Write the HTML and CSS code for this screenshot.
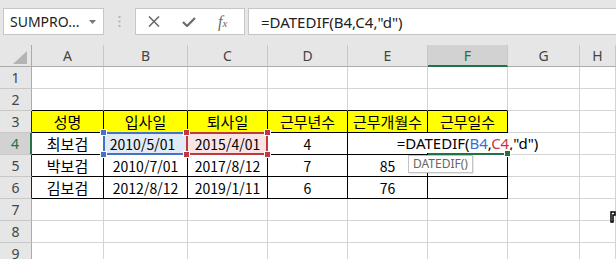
FILE: index.html
```html
<!DOCTYPE html>
<html lang="ko">
  <head>
    <meta charset="UTF-8" />
    <title>DATEDIF</title>
    <link rel="stylesheet" href="styles.css">
  </head>
  <body>
    <div class="toolbar">
      <div class="namebox">
        <span>SUMPRO...</span>
        <svg width="7" height="4" viewBox="0 0 7 4"><path d="M0 0h7L3.5 4z" fill="#777"/></svg>
      </div>
      <div class="grip">
        <svg width="3" height="11" viewBox="0 0 3 11"><rect x="0.5" y="0" width="2" height="2" fill="#b5b5b5"/><rect x="0.5" y="4.5" width="2" height="2" fill="#b5b5b5"/><rect x="0.5" y="9" width="2" height="2" fill="#b5b5b5"/></svg>
      </div>
      <div class="fxbox">
        <svg width="12" height="11" viewBox="0 0 12 11"><path d="M1 0.5l10 10M11 0.5l-10 10" stroke="#6b6b6b" stroke-width="1.6" fill="none"/></svg>
        <svg width="14" height="10" viewBox="0 0 14 10"><path d="M1 5l4 4l8 -8" stroke="#6b6b6b" stroke-width="2.2" fill="none"/></svg>
        <span class="fx">f<sub>x</sub></span>
      </div>
      <div class="formula">=DATEDIF(B4,C4,"d")</div>
    </div>

    <div class="sheet">
      <!-- column headers -->
      <div class="ch corner"><svg width="14" height="13" viewBox="0 0 14 13"><path d="M14 0v13H0z" fill="#b4b4b4"/></svg></div>
      <div class="ch">A</div>
      <div class="ch">B</div>
      <div class="ch">C</div>
      <div class="ch">D</div>
      <div class="ch">E</div>
      <div class="ch on">F</div>
      <div class="ch">G</div>
      <div class="ch">H</div>

      <!-- row 1 -->
      <div class="rh">1</div>
      <div class="c"></div><div class="c"></div><div class="c"></div><div class="c"></div>
      <div class="c"></div><div class="c"></div><div class="c"></div><div class="c"></div>

      <!-- row 2 -->
      <div class="rh">2</div>
      <div class="c top"></div><div class="c top"></div><div class="c top"></div><div class="c top"></div>
      <div class="c top"></div><div class="c top"></div><div class="c"></div><div class="c"></div>

      <!-- row 3 -->
      <div class="rh edge">3</div>
      <div class="c t hd">성명</div>
      <div class="c t hd">입사일</div>
      <div class="c t hd">퇴사일</div>
      <div class="c t hd">근무년수</div>
      <div class="c t hd">근무개월수</div>
      <div class="c t hd">근무일수</div>
      <div class="c"></div><div class="c"></div>

      <!-- row 4 -->
      <div class="rh on">4</div>
      <div class="c t">최보검</div>
      <div class="c t n ref-b">
        2010/5/01
        <span class="box"></span>
        <span class="sq tl"></span><span class="sq bl"></span>
      </div>
      <div class="c t n ref-c">
        2015/4/01
        <span class="box"></span>
        <span class="sq tl"></span><span class="sq bl"></span>
        <span class="sq tr"></span><span class="sq br"></span>
      </div>
      <div class="c t n">4</div>
      <div class="c t"></div>
      <div class="c t active">
        <span class="edit">=DATEDIF(<b class="blue">B4</b>,<b class="red">C4</b>,"d")</span>
        <span class="handle"></span>
        <span class="tip">DATEDIF()</span>
      </div>
      <div class="c"></div><div class="c"></div>

      <!-- row 5 -->
      <div class="rh edge">5</div>
      <div class="c t">박보검</div>
      <div class="c t n">2010/7/01</div>
      <div class="c t n">2017/8/12</div>
      <div class="c t n">7</div>
      <div class="c t n">85</div>
      <div class="c t"></div>
      <div class="c"></div><div class="c"></div>

      <!-- row 6 -->
      <div class="rh edge">6</div>
      <div class="c t">김보검</div>
      <div class="c t n">2012/8/12</div>
      <div class="c t n">2019/1/11</div>
      <div class="c t n">6</div>
      <div class="c t n">76</div>
      <div class="c t"></div>
      <div class="c"></div><div class="c"></div>

      <!-- rows 7-9 -->
      <div class="rh">7</div>
      <div class="c"></div><div class="c"></div><div class="c"></div><div class="c"></div>
      <div class="c"></div><div class="c"></div><div class="c"></div><div class="c"></div>
      <div class="rh">8</div>
      <div class="c"></div><div class="c"></div><div class="c"></div><div class="c"></div>
      <div class="c"></div><div class="c"></div><div class="c"></div><div class="c"></div>
      <div class="rh">9</div>
      <div class="c"></div><div class="c"></div><div class="c"></div><div class="c"></div>
      <div class="c"></div><div class="c"></div><div class="c"></div><div class="c"></div>

      <svg class="cursor" width="6" height="12" viewBox="0 0 6 12"><path d="M1 1h4v3h-2v7h-2z" fill="#fff" stroke="#000" stroke-width="1.5"/></svg>
    </div>
  </body>
</html>
```

FILE: styles.css
```css
body {
  margin: 0;
  background: #e6e6e6;
  font-family: "Noto Sans", sans-serif;
  overflow: hidden;
}

/* formula bar */
.toolbar {
  display: flex;
  align-items: center;
  height: 45px;
  padding: 8px 0 10px 3px;
  box-sizing: border-box;
}

.namebox {
  width: 101px;
  height: 27px;
  box-sizing: border-box;
  border: 1px solid #c6c6c6;
  background: #fff;
  display: flex;
  align-items: center;
  justify-content: space-between;
  padding: 0 7px 0 6px;
  font-size: 14px;
  color: #222;
}

.grip {
  width: 31px;
  display: flex;
  justify-content: center;
}

.fxbox {
  width: 110px;
  height: 27px;
  box-sizing: border-box;
  border: 1px solid #c6c6c6;
  background: #fff;
  display: flex;
  align-items: center;
  gap: 22px;
  padding-left: 12px;
}

.fx {
  font-family: "Liberation Serif", serif;
  font-style: italic;
  font-size: 16px;
  color: #6b6b6b;
}

.fx sub {
  font-size: 11px;
  vertical-align: 0;
}

.formula {
  flex: 1;
  margin-left: 3px;
  height: 27px;
  box-sizing: border-box;
  border: 1px solid #c6c6c6;
  border-right: none;
  background: #fff;
  display: flex;
  align-items: center;
  padding-left: 12px;
  font-size: 15px;
  color: #222;
  white-space: nowrap;
}

/* sheet grid */
.sheet {
  position: relative;
  display: grid;
  grid-template-columns: 32px 72px 84px 80px 80px 80px 80px 72px 1fr;
  grid-auto-rows: 22px;
  background: #fff;
}

.ch,
.rh,
.c {
  box-sizing: border-box;
  display: flex;
  align-items: center;
  justify-content: center;
}

.ch {
  background: #e6e6e6;
  border-right: 1px solid #c8c8c8;
  border-bottom: 1px solid #ababab;
  font-size: 14px;
  color: #444;
}

.ch.corner {
  border-right-color: #ababab;
  justify-content: flex-end;
  align-items: flex-end;
  padding: 0 4px 2px 0;
}

.ch.on {
  background: #d2d2d2;
  border-bottom: 2px solid #217346;
  color: #217346;
}

.rh {
  background: #e6e6e6;
  border-right: 1px solid #ababab;
  border-bottom: 1px solid #c8c8c8;
  font-size: 14px;
  color: #444;
}

.rh.edge {
  border-right-color: #222;
}

.rh.on {
  background: #d2d2d2;
  border-right: 2px solid #217346;
  color: #217346;
}

.c {
  border-right: 1px solid #d4d4d4;
  border-bottom: 1px solid #d4d4d4;
  font-family: "Noto Sans CJK KR", sans-serif;
  font-size: 15px;
  color: #000;
  white-space: nowrap;
}

.c.n {
  font-size: 14px;
}

.c.top {
  border-bottom-color: #000;
}

.c.t {
  border-right-color: #000;
  border-bottom-color: #000;
}

.c.hd {
  background: #ffff00;
}

/* referenced ranges */
.ref-b,
.ref-c {
  position: relative;
}

.ref-b {
  background: #e1eaf7;
  padding-right: 6px;
}

.ref-c {
  background: #f9e3e3;
}

.box {
  position: absolute;
  top: -1px;
  bottom: -1px;
  left: -1px;
  right: -1px;
  border: 2px solid #4472c4;
}

.ref-c .box {
  left: -2px;
  border-color: #c0393f;
}

.sq {
  position: absolute;
  width: 5px;
  height: 5px;
  background: #4472c4;
  border: 1px solid #fff;
}

.ref-c .sq {
  background: #c0393f;
}

.sq.tl { top: -4px; left: -4px; }
.sq.bl { bottom: -4px; left: -4px; }
.ref-c .sq.tl { left: -5px; }
.ref-c .sq.bl { left: -5px; }
.sq.tr { top: -4px; right: -4px; }
.sq.br { bottom: -4px; right: -4px; }

/* cell in edit mode */
.c.active {
  position: relative;
  z-index: 2;
  border-bottom: 2px solid #217346;
}

.edit {
  background: #fff;
  font-family: "Noto Sans", sans-serif;
  font-size: 15px;
  padding: 0 2px;
}

.edit b {
  font-weight: normal;
}

.blue {
  color: #3a6fd0;
}

.red {
  color: #c8343c;
}

.handle {
  position: absolute;
  right: -4px;
  bottom: -4px;
  width: 5px;
  height: 5px;
  background: #217346;
  border: 1px solid #fff;
}

.tip {
  position: absolute;
  top: calc(100% + 2px);
  left: -20px;
  padding: 0 4px;
  height: 16px;
  line-height: 16px;
  background: #fff;
  border: 1px solid #c3c3c3;
  box-shadow: 1px 1px 1px rgba(0, 0, 0, 0.08);
  font-family: "Noto Sans", sans-serif;
  font-size: 12px;
  color: #666;
}

.cursor {
  position: absolute;
  left: 610px;
  top: 166px;
}
```
